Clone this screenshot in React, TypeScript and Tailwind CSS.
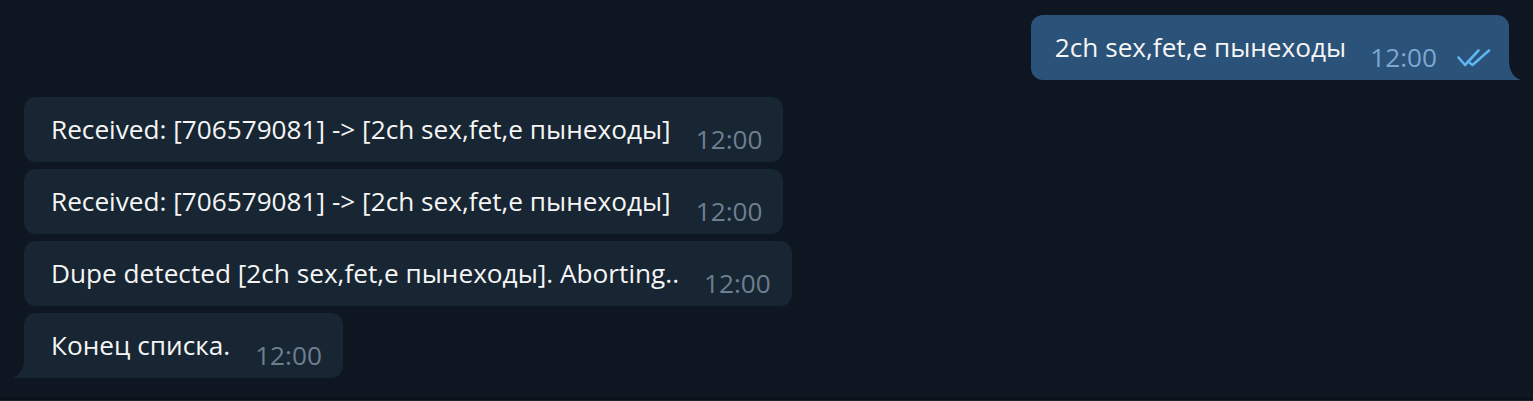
import React from 'react';

const font = { fontFamily: '"Open Sans", "Noto Sans", sans-serif' };

function Checks() {
  return (
    <svg width="36" height="20" viewBox="0 0 36 20" fill="none" className="ml-[19px] mt-[20px] shrink-0">
      <path d="M2.5 9.5 L9 17 L22.5 2.5" stroke="#5fb4f2" strokeWidth="2.6" strokeLinecap="round" strokeLinejoin="round" />
      <path d="M14 15 L16.5 17 L33 2.5" stroke="#5fb4f2" strokeWidth="2.6" strokeLinecap="round" strokeLinejoin="round" />
    </svg>
  );
}

function Incoming({ text, tail }: { text: string; tail?: boolean }) {
  return (
    <div
      className={`relative flex items-center w-fit h-[65px] pl-[27px] pr-[21px] bg-[#182533] rounded-[12px] ${tail ? 'rounded-bl-none' : ''}`}
    >
      <span className="text-[26.2px] leading-none text-[#f5f5f5] whitespace-nowrap">{text}</span>
      <span className="text-[26.2px] leading-none text-[#6d7f8f] ml-[25px] mt-[20px]">12:00</span>
      {tail && (
        <svg width="12" height="20" viewBox="0 0 12 20" className="absolute left-[-12px] bottom-0">
          <path d="M12 0 C12 11 7 18 0 20 L12 20 Z" fill="#182533" />
        </svg>
      )}
    </div>
  );
}

export default function App() {
  return (
    <div className="w-full h-screen bg-[#0e1621] flex flex-col overflow-hidden" style={font}>
      <div className="flex-1 flex flex-col pt-[15px] pl-[24px] pr-[24px]">
        {/* outgoing */}
        <div className="self-end relative flex items-center h-[65px] pl-[24px] pr-[17px] bg-[#2b5278] rounded-[12px] rounded-br-none">
          <span className="text-[26.2px] leading-none text-[#f5f5f5] whitespace-nowrap">2ch sex,fet,e пынеходы</span>
          <span className="text-[26.2px] leading-none text-[#7da8d3] ml-[24px] mt-[20px]">12:00</span>
          <Checks />
          <svg width="12" height="20" viewBox="0 0 12 20" className="absolute right-[-12px] bottom-0">
            <path d="M0 0 C0 11 5 18 12 20 L0 20 Z" fill="#2b5278" />
          </svg>
        </div>

        <div className="flex flex-col gap-[7px] mt-[17px]">
          <Incoming text="Received: [706579081] -> [2ch sex,fet,e пынеходы]" />
          <Incoming text="Received: [706579081] -> [2ch sex,fet,e пынеходы]" />
          <Incoming text="Dupe detected [2ch sex,fet,e пынеходы]. Aborting.." />
          <Incoming text="Конец списка." tail />
        </div>
      </div>
      <div className="h-[3px] bg-[#0a1119] border-b border-[#1c2631]" />
    </div>
  );
}
